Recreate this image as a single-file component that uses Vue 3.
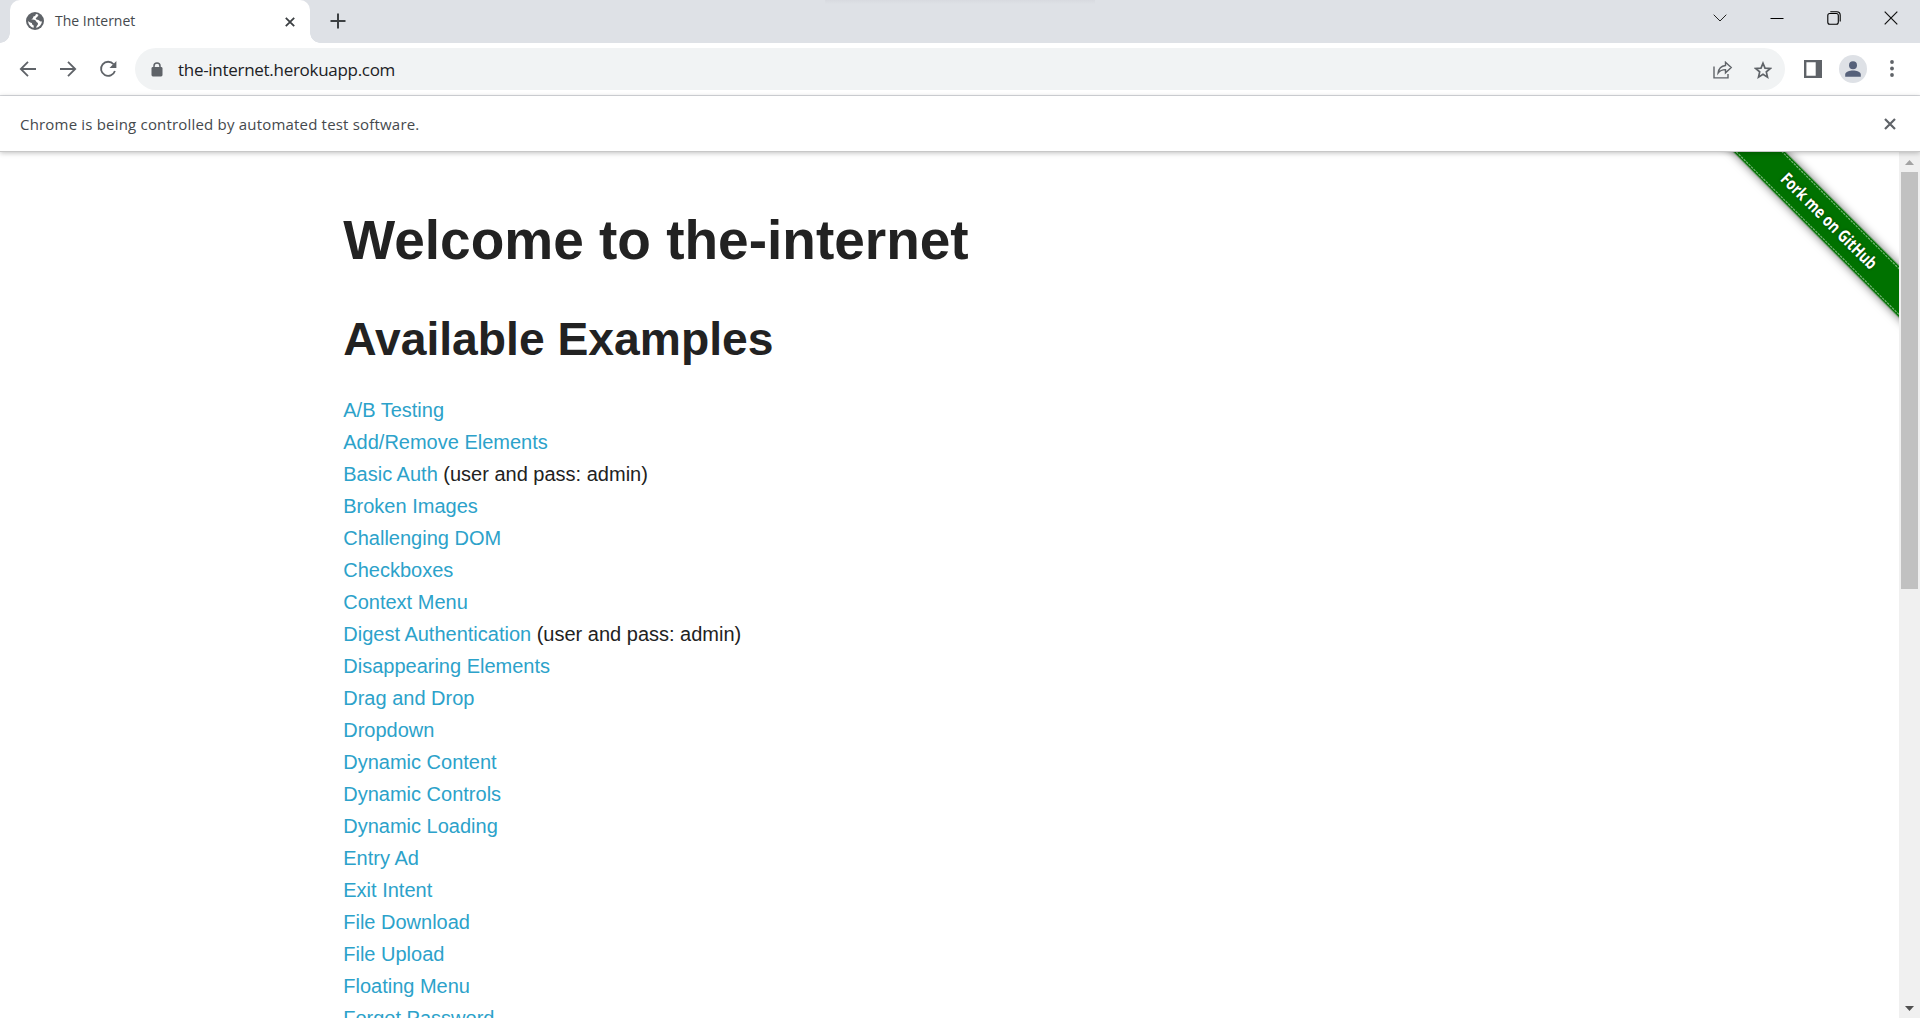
<script setup>
const examples = [
  { name: 'A/B Testing' },
  { name: 'Add/Remove Elements' },
  { name: 'Basic Auth', note: '(user and pass: admin)' },
  { name: 'Broken Images' },
  { name: 'Challenging DOM' },
  { name: 'Checkboxes' },
  { name: 'Context Menu' },
  { name: 'Digest Authentication', note: '(user and pass: admin)' },
  { name: 'Disappearing Elements' },
  { name: 'Drag and Drop' },
  { name: 'Dropdown' },
  { name: 'Dynamic Content' },
  { name: 'Dynamic Controls' },
  { name: 'Dynamic Loading' },
  { name: 'Entry Ad' },
  { name: 'Exit Intent' },
  { name: 'File Download' },
  { name: 'File Upload' },
  { name: 'Floating Menu' },
  { name: 'Forgot Password' },
]
</script>

<template>
  <div class="window">
    <header class="tabstrip">
      <div class="edge"></div>
      <div class="tab">
        <svg class="favicon" width="18" height="18" viewBox="0 0 18 18">
          <circle cx="9" cy="9" r="9" fill="#5f6368" />
          <path d="M9.9 2.1c-.2 1.500-1 2.300-2.500 2.500-.2 1.500-.8 2.400-2.200 2.900 1.900.3 4.300.1 4.900 1.700.2 1.400 1.900.8 1.900 2.500 0 1.700-1.600 1.800-1.900 4.100 3.300-.6 5.700-3.200 5.800-6.500-1 .4-2.100.3-2.700-.7-.7-1.200-2.900-.2-3.400-1.800-.4-1.500 1.700-1.300 1.900-2.600.1-.9.800-.9.900-1.300-.8-.5-1.700-.8-2.700-.8zM2.100 9.100c.2 3.400 2.500 6.100 5.600 6.700v-2.300c-1.400-.3-1.800-1.200-1.800-2.400-1.500-.2-2.700-.9-3.800-2z" fill="#fff" />
        </svg>
        <span class="tab-title">The Internet</span>
        <svg class="tab-close" width="10" height="10" viewBox="0 0 10 10"><path d="M.8.8l8.400 8.400M9.200.8L.8 9.200" stroke="#3c4043" stroke-width="1.800" /></svg>
      </div>
      <svg class="new-tab" width="16" height="16" viewBox="0 0 16 16"><path d="M8 .5v15M.5 8h15" stroke="#3c4043" stroke-width="2" /></svg>
      <div class="top-shade"></div>
      <div class="controls">
        <svg width="14" height="8" viewBox="0 0 14 8"><path d="M.7.700L7 7l6.300-6.300" fill="none" stroke="#222" stroke-width="1" /></svg>
        <svg width="14" height="14" viewBox="0 0 14 14"><path d="M.5 7.500h13" stroke="#000" /></svg>
        <svg width="14" height="14" viewBox="0 0 14 14" fill="none" stroke="#000" stroke-width="1.100"><rect x=".8" y="2.500" width="10.500" height="10.700" rx="2" /><path d="M3.300.7h6.400a3.500 3.500 0 0 1 3.500 3.500v6.300" /></svg>
        <svg width="14" height="14" viewBox="0 0 14 14"><path d="M.7.700l12.600 12.600M13.300.7L.7 13.300" stroke="#111" stroke-width="1.200" /></svg>
      </div>
    </header>

    <div class="toolbar">
      <nav class="nav">
        <svg width="18" height="18" viewBox="0 0 18 18"><path d="M17 9H2.500M9 1.800L1.800 9 9 16.200" /></svg>
        <svg width="18" height="18" viewBox="0 0 18 18"><path d="M1 9h14.500M9 1.800L16.200 9 9 16.200" /></svg>
        <svg width="18" height="18" viewBox="0 0 18 18"><path d="M14.600 4.300A7.100 7.100 0 1 0 15.900 11" /><path d="M17.400 1v6.900h-6.900z" class="solid" /></svg>
      </nav>
      <div class="omnibox">
        <svg class="lock" width="12" height="15" viewBox="0 0 12 15"><rect x=".5" y="5" width="11" height="9.500" rx="1.400" fill="#5f6368" /><path d="M3 5.500V4a3 3 0 0 1 6 0v1.500" fill="none" stroke="#5f6368" stroke-width="1.500" /></svg>
        <span class="url">the-internet.herokuapp.com</span>
        <svg class="share" width="20" height="18" viewBox="0 0 20 18"><path d="M1 5.500V16.900h14v-4M12.500 1.200l5.700 5.300-5.700 5.300V8.600c-3.300 0-5.500.9-7.400 3.400.5-4 2.700-6.900 7.400-7.500z" fill="none" stroke="#5f6368" stroke-width="1.400" /></svg>
        <svg class="star" width="18" height="18" viewBox="0 0 18 18"><path d="M9 2.200l2 4.900 5.300.4-4 3.400 1.200 5.200L9 13.300l-4.500 2.800 1.200-5.200-4-3.400L7 7.100z" fill="none" stroke="#5f6368" stroke-width="1.700" /></svg>
      </div>
      <svg class="panel" width="18" height="18" viewBox="0 0 18 18"><path d="M0 0h18v18H0zM2.400 2.200v13.600h9.300V2.200z" fill="#5f6368" fill-rule="evenodd" /></svg>
      <svg class="avatar" width="28" height="28" viewBox="0 0 28 28"><circle cx="14" cy="14" r="14" fill="#dee1e6" /><circle cx="14" cy="10.200" r="4" fill="#56617a" /><path d="M6.200 21.800v-2.300c0-2.600 4.500-4 7.800-4s7.800 1.400 7.800 4v2.300z" fill="#56617a" /></svg>
      <svg class="menu" width="4" height="17" viewBox="0 0 4 17" fill="#5f6368"><circle cx="2" cy="2" r="1.900" /><circle cx="2" cy="8.500" r="1.900" /><circle cx="2" cy="15" r="1.900" /></svg>
    </div>

    <div class="infobar">
      <span class="info-text">Chrome is being controlled by automated test software.</span>
      <svg width="12" height="12" viewBox="0 0 12 12"><path d="M1 1l10 10M11 1L1 11" stroke="#5f6368" stroke-width="2.200" /></svg>
    </div>

    <div class="viewport">
      <main class="page">
        <div class="row">
          <h1>Welcome to the-internet</h1>
          <h2>Available Examples</h2>
          <ul>
            <li v-for="item in examples" :key="item.name">
              <a>{{ item.name }}</a><span v-if="item.note">&nbsp;{{ item.note }}</span>
            </li>
          </ul>
        </div>
        <svg class="ribbon" width="186" height="186" viewBox="0 0 186 186">
          <g transform="translate(115.700 69.300) rotate(45)">
            <rect class="band" x="-180" y="-18.300" width="360" height="36.600" />
            <path d="M-160-16.200h320M-160 16.200h320" class="stitch" />
            <text x="-64" y="5.500" textLength="128" lengthAdjust="spacingAndGlyphs">Fork me on GitHub</text>
          </g>
        </svg>
      </main>
      <div class="scrollbar">
        <svg width="9" height="5" viewBox="0 0 9 5"><path d="M0 5L4.500 0 9 5z" fill="#a3a3a3" /></svg>
        <div class="thumb"></div>
        <svg class="down" width="9" height="5" viewBox="0 0 9 5"><path d="M0 0h9L4.500 5z" fill="#505050" /></svg>
      </div>
    </div>
  </div>
</template>

<style>
body {
  margin: 0;
  overflow: hidden;
}
</style>

<style scoped>
.window {
  display: flex;
  flex-direction: column;
  width: 1920px;
  height: 1018px;
  overflow: hidden;
  background: #fff;
  font-family: "Open Sans", "Noto Sans", sans-serif;
}
svg {
  display: block;
  flex: none;
}
.tabstrip {
  position: relative;
  display: flex;
  height: 43px;
  flex: none;
  background: #dee1e6;
}
.edge {
  width: 10px;
  background: radial-gradient(circle at 0 33px, #dee1e6 9.500px, #fff 10px);
  clip-path: inset(33px 0 0 0);
}
.tab {
  position: relative;
  display: flex;
  align-items: center;
  box-sizing: border-box;
  width: 300px;
  height: 43px;
  padding: 0 15px 2px 16px;
  border-radius: 10px 10px 0 0;
  background: #fff;
}
.tab::after {
  content: "";
  position: absolute;
  left: 300px;
  bottom: 0;
  width: 10px;
  height: 10px;
  background: radial-gradient(circle at 10px 0, #dee1e6 9.500px, #fff 10px);
}
.tab-title {
  margin-left: 11px;
  flex: 1;
  font-size: 14px;
  color: #45494d;
}
.tab-close {
  margin-top: 2px;
}
.new-tab {
  margin: 13px 0 0 19.500px;
}
.top-shade {
  position: absolute;
  left: 825px;
  top: 0;
  width: 270px;
  height: 4px;
  background: linear-gradient(#d8dae0, #dee1e6);
}
.controls {
  display: flex;
  align-items: center;
  gap: 43px;
  height: 36px;
  margin: 0 22px 0 auto;
}
.toolbar {
  display: flex;
  align-items: center;
  box-sizing: border-box;
  height: 53px;
  flex: none;
  padding: 0 26px 1px 19px;
  border-bottom: 1px solid #d9dbdf;
}
.nav {
  display: flex;
  gap: 22px;
}
.nav path {
  fill: none;
  stroke: #5f6368;
  stroke-width: 1.800;
}
.nav .solid {
  fill: #5f6368;
  stroke: none;
}
.omnibox {
  display: flex;
  align-items: center;
  box-sizing: border-box;
  width: 1650px;
  height: 42px;
  margin-left: 18px;
  padding: 2px 13px 0 16px;
  border-radius: 21px;
  background: #f1f3f4;
}
.url {
  flex: 1;
  margin-left: 15px;
  font-size: 17px;
  letter-spacing: -0.290px;
  color: #202124;
}
.star {
  margin-left: 21px;
}
.panel {
  margin-left: 18.500px;
}
.avatar {
  margin-left: 17px;
}
.menu {
  margin-left: auto;
}
.infobar {
  position: relative;
  z-index: 2;
  display: flex;
  align-items: center;
  justify-content: space-between;
  height: 55px;
  flex: none;
  padding: 0 24px 0 20px;
  background: #fff;
  border-bottom: 1px solid #c8c8c8;
  box-shadow: 0 1px 5px rgba(0, 0, 0, 0.250);
}
.info-text {
  font-size: 15px;
  letter-spacing: 0.190px;
  color: #45494d;
}
.viewport {
  display: flex;
  flex: 1;
  min-height: 0;
}
.page {
  position: relative;
  flex: 1;
  overflow: hidden;
  color: #222;
  font-family: "Liberation Sans", Arial, sans-serif;
}
.row {
  box-sizing: border-box;
  width: 1250px;
  margin: 0 auto;
  padding: 50px 18.750px 0;
}
h1,
h2 {
  margin: 0;
  line-height: 1.400;
  font-weight: bold;
}
h1 {
  font-size: 55px;
}
h2 {
  margin-top: 28px;
  font-size: 46.250px;
}
ul {
  margin: 22px 0 0;
  padding: 0;
  list-style: none;
  font-size: 20px;
  line-height: 32px;
}
li {
  white-space: nowrap;
}
a {
  color: #2ca2ca;
}
.ribbon {
  position: absolute;
  top: 0;
  right: 0;
}
.band {
  fill: #007200;
  filter: drop-shadow(0 0 5px rgba(0, 0, 0, 0.550));
}
.stitch {
  stroke: #76b276;
  stroke-width: 1.200;
  stroke-dasharray: 2.500 1;
}
.ribbon text {
  fill: #fff;
  font: bold 17px "Open Sans", sans-serif;
  text-shadow: 0 0 3px rgba(0, 0, 0, 0.500);
}
.scrollbar {
  display: flex;
  flex-direction: column;
  align-items: center;
  box-sizing: border-box;
  width: 21px;
  padding: 8px 0 7px;
  background: #f0f0f0;
}
.thumb {
  width: 17px;
  height: 417px;
  margin-top: 7px;
  background: #c1c1c1;
}
.down {
  margin-top: auto;
}
</style>
